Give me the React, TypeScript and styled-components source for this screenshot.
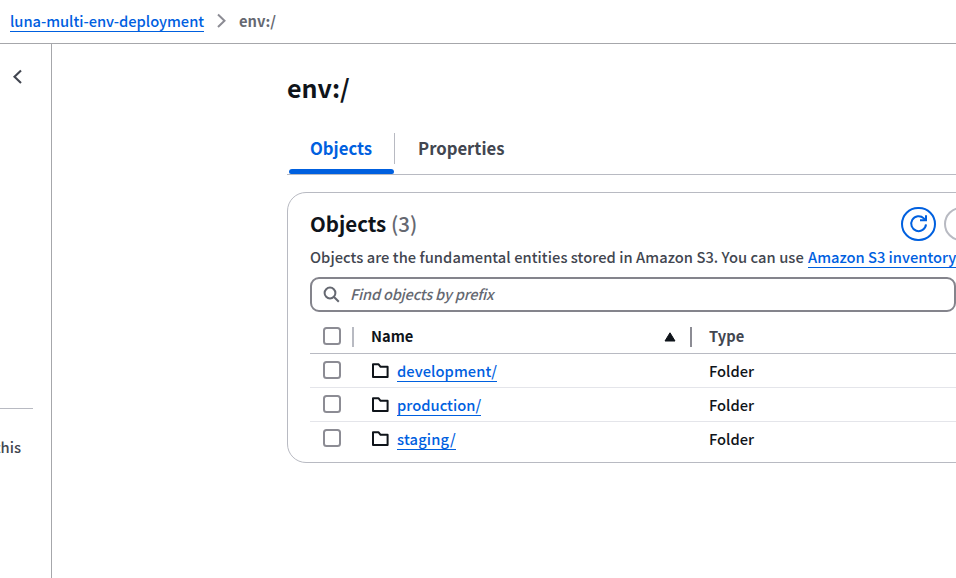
import React from 'react';
import styled, { createGlobalStyle } from 'styled-components';

const blue = '#0060df';
const ink = '#0f141a';
const slate = '#424650';
const gray = '#656871';
const line = '#b8bac2';

const GlobalStyle = createGlobalStyle`
  * { box-sizing: border-box; }
  body {
    margin: 0;
    background: #fff;
    color: ${ink};
    font: 500 14.7px/20px "Noto Sans CJK SC", "Noto Sans", sans-serif;
    overflow: hidden;
    white-space: nowrap;
  }
`;

const Page = styled.div`
  display: flex;
  flex-direction: column;
  width: 100vw;
  height: 100vh;
  overflow: hidden;
`;

const Breadcrumbs = styled.nav`
  display: flex;
  align-items: flex-start;
  height: 44px;
  flex: none;
  padding: 11px 0 0 10px;
  border-bottom: 1px solid #a6a7ab;
`;

const Link = styled.a<{ $spacing?: number }>`
  display: block;
  height: 21px;
  color: ${blue};
  border-bottom: 1px solid ${blue};
  letter-spacing: ${p => p.$spacing ?? 0}px;
  cursor: pointer;
`;

const CrumbChevron = styled.svg`
  width: 12px;
  height: 16px;
  margin: 2px 11px 0 12px;
`;

const CurrentCrumb = styled.span`
  color: ${gray};
  font-weight: 700;
`;

const Body = styled.div`
  display: flex;
  flex: 1;
  min-height: 0;
`;

const Sidebar = styled.aside`
  display: flex;
  flex-direction: column;
  align-items: flex-start;
  width: 52px;
  flex: none;
  border-right: 1px solid #a6a7ab;
  overflow: hidden;
`;

const CollapseIcon = styled.svg`
  width: 12px;
  height: 16px;
  margin: 25px 0 0 12px;
`;

const SidebarRule = styled.div`
  width: 33px;
  height: 1px;
  margin-top: 323px;
  background: ${line};
`;

const SidebarText = styled.div`
  display: flex;
  justify-content: flex-end;
  width: 21px;
  margin-top: 28px;
  color: ${slate};
`;

const Main = styled.main`
  flex: 1;
  min-width: 0;
  padding: 27px 0 0 235px;
  overflow: hidden;
`;

const Title = styled.h1`
  margin: 0;
  font-size: 25px;
  line-height: 32px;
  font-weight: 700;
`;

const Tabs = styled.div`
  display: flex;
  height: 46px;
  margin-top: 26px;
  padding-left: 2px;
  border-bottom: 1px solid ${line};
`;

const Tab = styled.button<{ $active?: boolean }>`
  display: flex;
  flex-direction: column;
  justify-content: space-between;
  width: ${p => (p.$active ? 105 : 130)}px;
  height: 45px;
  padding: 7px 0 0;
  border: 0;
  background: none;
  color: ${p => (p.$active ? blue : slate)};
  font: 700 16.7px/24px "Noto Sans CJK SC", "Noto Sans", sans-serif;
  text-align: left;

  span { padding-left: ${p => (p.$active ? 21 : 23)}px; }

  &::after {
    content: '';
    width: 100%;
    height: 5px;
    border-radius: 3px 3px 2px 2px;
    background: ${p => (p.$active ? blue : 'transparent')};
  }
`;

const TabDivider = styled.div`
  width: 1px;
  height: 31px;
  margin-top: 4px;
  background: ${line};
`;

const Card = styled.section`
  width: 760px;
  height: 271px;
  margin-top: 17px;
  padding: 14px 0 0 22px;
  border: 1px solid ${line};
  border-radius: 19px;
`;

const CardHeader = styled.header`
  display: flex;
  align-items: flex-start;
  height: 35px;
`;

const Heading = styled.h2`
  width: 591px;
  margin: 0;
  font-size: 20.5px;
  line-height: 32px;
  font-weight: 700;
`;

const Count = styled.span`
  color: ${gray};
  font-weight: 500;
`;

const RoundButton = styled.button<{ $muted?: boolean }>`
  display: grid;
  place-items: center;
  flex: none;
  width: 35px;
  height: 34px;
  margin-right: 8px;
  padding: 0;
  border: 2px solid ${p => (p.$muted ? line : blue)};
  border-radius: 18px;
  background: #fff;
`;

const Description = styled.p`
  display: flex;
  gap: 4px;
  margin: 5px 0 0;
  color: ${slate};
  height: 20px;
`;

const Sentence = styled.span`
  width: 494px;
  letter-spacing: 0.05px;
`;

const Search = styled.div`
  display: flex;
  align-items: center;
  gap: 10px;
  width: 646px;
  height: 35px;
  margin-top: 10px;
  padding: 0 0 1px 11px;
  border: 2px solid #84848c;
  border-radius: 9px;
  color: ${gray};
  font-style: italic;
  font-size: 14.5px;
  letter-spacing: -0.18px;

  svg { margin-top: 1px; }
`;

const Row = styled.div<{ $head?: boolean; $last?: boolean }>`
  display: grid;
  grid-template-columns: 61px 338px 1fr;
  height: ${p => (p.$head ? 42 : 34)}px;
  border-bottom: 1px solid ${p => (p.$last ? 'transparent' : p.$head ? line : '#e4e5ea')};
  font-weight: ${p => (p.$head ? 700 : 500)};
`;

const CheckCell = styled.div<{ $head?: boolean }>`
  display: flex;
  align-items: flex-start;
  padding: ${p => (p.$head ? '15px' : '7px')} 0 0 13px;
`;

const Checkbox = styled.span`
  width: 18px;
  height: 18px;
  border: 2px solid #8c8c94;
  border-radius: 3.5px;
`;

const Separator = styled.span<{ $dark?: boolean }>`
  width: 2px;
  height: 20px;
  margin-left: ${p => (p.$dark ? 14 : 11)}px;
  background: ${p => (p.$dark ? '#8c8c94' : line)};
`;

const HeadCell = styled.div`
  display: flex;
  align-items: flex-start;
  padding-top: 15px;
`;

const HeadLabel = styled.span<{ $muted?: boolean }>`
  width: 293px;
  flex: none;
  margin-top: -1px;
  color: ${p => (p.$muted ? slate : ink)};
`;

const Cell = styled.div`
  display: flex;
  align-items: flex-start;
  padding-top: 7px;
`;

const FolderSvg = styled.svg`
  width: 18px;
  height: 17px;
  margin: 1px 8px 0 0;
`;

const FolderIcon = () => (
  <FolderSvg viewBox="0 0 18 17" fill="none" stroke={ink} strokeWidth="2" strokeLinejoin="round">
    <path d="M2 15V2.2h5.4l2.2 2.6H16.6V15z" />
  </FolderSvg>
);

const folders = [
  { name: 'development/', spacing: 0.06 },
  { name: 'production/', spacing: 0.03 },
  { name: 'staging/', spacing: 0.18 },
];

export default function App() {
  return (
    <Page>
      <GlobalStyle />
      <Breadcrumbs>
        <Link $spacing={-0.03}>luna-multi-env-deployment</Link>
        <CrumbChevron viewBox="0 0 12 16" fill="none" stroke="#8c8c94" strokeWidth="2">
          <path d="M2 1.5L8.5 7.7L2 14" />
        </CrumbChevron>
        <CurrentCrumb>env:/</CurrentCrumb>
      </Breadcrumbs>
      <Body>
        <Sidebar>
          <CollapseIcon viewBox="0 0 12 16" fill="none" stroke={slate} strokeWidth="2.1">
            <path d="M9 1.5L2.5 7.8L9 14" />
          </CollapseIcon>
          <SidebarRule />
          <SidebarText>this</SidebarText>
        </Sidebar>
        <Main>
          <Title>env:/</Title>
          <Tabs>
            <Tab $active><span>Objects</span></Tab>
            <TabDivider />
            <Tab><span>Properties</span></Tab>
          </Tabs>
          <Card>
            <CardHeader>
              <Heading>Objects <Count>(3)</Count></Heading>
              <RoundButton aria-label="Refresh">
                <svg width="20" height="20" viewBox="0 0 20 20" fill="none" stroke={blue} strokeWidth="2">
                  <path d="M17 10.4A7.4 7.4 0 1 1 14.8 4.4L16 5.8" />
                  <path d="M17 1.2V6.3H11" />
                </svg>
              </RoundButton>
              <RoundButton $muted aria-label="Copy" />
            </CardHeader>
            <Description>
              <Sentence>Objects are the fundamental entities stored in Amazon S3. You can use</Sentence>
              <Link>Amazon S3 inventory</Link>
            </Description>
            <Search>
              <svg width="17" height="17" viewBox="0 0 17 17" fill="none" stroke={gray} strokeWidth="2">
                <circle cx="7" cy="7" r="5.4" />
                <path d="M11 11L15.8 15.8" />
              </svg>
              <span>Find objects by prefix</span>
            </Search>
            <Row $head>
              <CheckCell $head><Checkbox /><Separator /></CheckCell>
              <HeadCell>
                <HeadLabel>Name</HeadLabel>
                <svg width="12" height="20" viewBox="0 0 12 20">
                  <path d="M6 5.8L11 14H1z" fill={ink} stroke={ink} strokeWidth="1" strokeLinejoin="round" />
                </svg>
                <Separator $dark />
              </HeadCell>
              <HeadCell><HeadLabel $muted>Type</HeadLabel></HeadCell>
            </Row>
            {folders.map((f, i) => (
              <Row key={f.name} $last={i === folders.length - 1}>
                <CheckCell><Checkbox /></CheckCell>
                <Cell><FolderIcon /><Link $spacing={f.spacing}>{f.name}</Link></Cell>
                <Cell>Folder</Cell>
              </Row>
            ))}
          </Card>
        </Main>
      </Body>
    </Page>
  );
}
